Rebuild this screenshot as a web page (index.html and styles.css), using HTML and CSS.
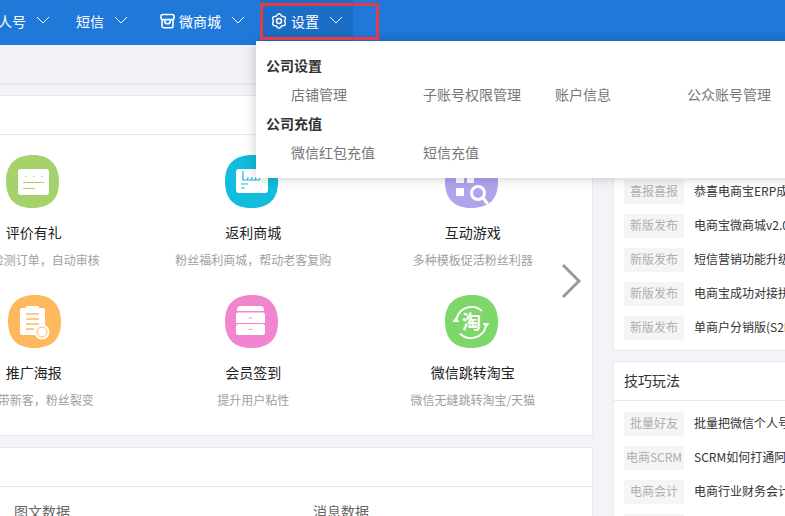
FILE: index.html
```html
<!DOCTYPE html>
<html lang="zh-CN">
<head>
<meta charset="utf-8">
<title>电商宝</title>
<link rel="stylesheet" href="styles.css">
</head>
<body>
<div class="page">
  <header class="topbar">
    <nav class="nav">
      <a class="nav-item"><span>个人号</span><svg class="chev" viewBox="0 0 14 8"><path d="M1 1l6 6 6-6"/></svg></a>
      <a class="nav-item"><span>短信</span><svg class="chev" viewBox="0 0 14 8"><path d="M1 1l6 6 6-6"/></svg></a>
      <a class="nav-item"><svg class="nav-icon store" viewBox="0 0 16 16"><rect x="1" y="1" width="14" height="5.500" rx="2"/><path d="M2.200 6.500v6.700a2 2 0 0 0 2 2h7.600a2 2 0 0 0 2-2V6.500M5 6.500v1.500a3 3 0 0 0 6 0V6.500"/></svg><span>微商城</span><svg class="chev" viewBox="0 0 14 8"><path d="M1 1l6 6 6-6"/></svg></a>
      <a class="nav-item active"><svg class="nav-icon gear" viewBox="0 0 16 16"><path d="M5.200 3.150Q8 -1.500 10.800 3.150Q16.200 3.250 13.600 8Q16.200 12.750 10.800 12.850Q8 17.500 5.200 12.850Q-.2 12.750 2.400 8Q-.2 3.250 5.200 3.150Z"/><circle cx="8" cy="8" r="2.500"/></svg><span>设置</span><svg class="chev" viewBox="0 0 14 8"><path d="M1 1l6 6 6-6"/></svg></a>
    </nav>
  </header>
  <div class="subbar"></div>
  <main class="content">
    <section class="left">
      <div class="card">
        <div class="card-head"></div>
        <div class="apps">
          <div class="app">
            <svg class="app-icon" viewBox="0 0 56 53"><path class="blob-green" d="M27 0C44 0 53 10 53 27 53 44 44 53 26 53 9 53 0 44 0 26 0 9 10 0 27 0Z"/><rect class="w" x="12" y="14" width="31" height="26" rx="3"/><path class="ln-green" d="M19 21.500h1.500M27 21.500h1.500M35 21.500h1.500M17 27.500h21M17 33.500h12"/></svg>
            <div class="app-title">评价有礼</div>
            <div class="app-sub">自动检测订单，自动审核</div>
          </div>
          <div class="app">
            <svg class="app-icon" viewBox="0 0 56 53"><path class="blob-teal" d="M27 0C44 0 53 10 53 27 53 44 44 53 26 53 9 53 0 44 0 26 0 9 10 0 27 0Z"/><rect class="w" x="11" y="14" width="32" height="24" rx="3"/><path class="ln-teal" d="M18 16v9h16c1-.5 1-2 1-3M22 25c1-.5 1-2 1-3M26 25c1-.5 1-2 1-3M30 25c1-.5 1-2 1-3M16 29h7M16 33h4"/></svg>
            <div class="app-title">返利商城</div>
            <div class="app-sub">粉丝福利商城，帮动老客复购</div>
          </div>
          <div class="app">
            <svg class="app-icon" viewBox="0 0 56 53"><path class="blob-purple" d="M27 0C44 0 53 10 53 27 53 44 44 53 26 53 9 53 0 44 0 26 0 9 10 0 27 0Z"/><path class="w" d="M11 11h8v17h-8zM22 11h7v17h-7zM11 33h8v8h-8z"/><circle class="glass" cx="33" cy="38" r="6.500"/><path class="handle" d="M38 43l4 5"/></svg>
            <div class="app-title">互动游戏</div>
            <div class="app-sub">多种模板促活粉丝利器</div>
          </div>
          <div class="app">
            <svg class="app-icon" viewBox="0 0 56 53"><path class="blob-orange" d="M29 0C46 0 55 10 55 27 55 44 46 53 28 53 11 53 2 44 2 26 2 9 12 0 29 0Z"/><rect class="w" x="14" y="13" width="25" height="27" rx="2"/><rect class="w" x="20" y="11" width="13" height="4" rx="1"/><path class="ln-orange" d="M20 19h13M20 24h13M20 29h13M20 34h8"/><circle class="w" cx="36" cy="37" r="7.500"/><circle class="ring-orange" cx="36" cy="37" r="5"/></svg>
            <div class="app-title">推广海报</div>
            <div class="app-sub">老客带新客，粉丝裂变</div>
          </div>
          <div class="app">
            <svg class="app-icon" viewBox="0 0 56 53"><path class="blob-pink" d="M27 0C44 0 53 10 53 27 53 44 44 53 26 53 9 53 0 44 0 26 0 9 10 0 27 0Z"/><path class="w" d="M16 11h19a4 4 0 0 1 4 4v1H12v-1a4 4 0 0 1 4-4z"/><path class="w" d="M13 17.500h25a2 2 0 0 1 2 2V28H11v-8.500a2 2 0 0 1 2-2z"/><rect class="w" x="11" y="29" width="29" height="11" rx="2.500"/><path class="ln-pink" d="M24 23h3M24 34.500h3"/></svg>
            <div class="app-title">会员签到</div>
            <div class="app-sub">提升用户粘性</div>
          </div>
          <div class="app">
            <svg class="app-icon" viewBox="0 0 56 53"><path class="blob-lime" d="M27 0C44 0 53 10 53 27 53 44 44 53 26 53 9 53 0 44 0 26 0 9 10 0 27 0Z"/><path class="arc" d="M11.500 24A15.500 15.500 0 0 1 37 16M41 31A15.500 15.500 0 0 1 15 38.500"/><path class="w" d="M7.500 27h7L11 22zM37.500 28h7L41 33z"/><text class="tao" x="26.500" y="34">淘</text></svg>
            <div class="app-title">微信跳转淘宝</div>
            <div class="app-sub">微信无缝跳转淘宝/天猫</div>
          </div>
        </div>
        <svg class="next" viewBox="0 0 20 36"><path d="M2 2l16 16L2 34"/></svg>
      </div>
      <div class="card card-gap">
        <div class="card-head"></div>
        <div class="stats">
          <div class="stat">图文数据</div>
          <div class="stat">消息数据</div>
        </div>
      </div>
    </section>
    <aside class="right">
      <div class="card">
        <div class="card-head"></div>
        <ul class="news">
          <li class="news-row"><span class="tag">喜报喜报</span><span class="news-text">恭喜电商宝荣获年度服务商</span></li>
          <li class="news-row"><span class="tag">喜报喜报</span><span class="news-text">恭喜电商宝ERP成功上线新版本</span></li>
          <li class="news-row"><span class="tag">新版发布</span><span class="news-text">电商宝微商城v2.0版本发布</span></li>
          <li class="news-row"><span class="tag">新版发布</span><span class="news-text">短信营销功能升级上线公告</span></li>
          <li class="news-row"><span class="tag">新版发布</span><span class="news-text">电商宝成功对接拼多多平台</span></li>
          <li class="news-row"><span class="tag">新版发布</span><span class="news-text">单商户分销版(S2B2C)发布</span></li>
        </ul>
      </div>
      <div class="card card-gap">
        <div class="card-head card-title">技巧玩法</div>
        <ul class="news">
          <li class="news-row"><span class="tag">批量好友</span><span class="news-text">批量把微信个人号好友导入</span></li>
          <li class="news-row"><span class="tag">电商SCRM</span><span class="news-text">SCRM如何打通阿里生态数据</span></li>
          <li class="news-row"><span class="tag">电商会计</span><span class="news-text">电商行业财务会计入门指南</span></li>
          <li class="news-row"><span class="tag">电商会计</span><span class="news-text">电商行业税务处理入门指南</span></li>
        </ul>
      </div>
    </aside>
  </main>
  <div class="dropdown">
    <div class="dd-head">公司设置</div>
    <div class="dd-row"><a>店铺管理</a><a>子账号权限管理</a><a>账户信息</a><a>公众账号管理</a></div>
    <div class="dd-head">公司充值</div>
    <div class="dd-row"><a>微信红包充值</a><a>短信充值</a></div>
  </div>
  <div class="marker"></div>
</div>
</body>
</html>
```
FILE: styles.css
```css
* { box-sizing: border-box; }
html, body { margin: 0; height: 100%; overflow: hidden; }
body {
  background: #f3f4f8;
  font-family: "Noto Sans CJK SC", "Liberation Sans", sans-serif;
  font-size: 14px;
}
ul { margin: 0; padding: 0; list-style: none; }

.page { position: relative; width: 1100px; margin-left: -80px; }

.topbar { height: 45px; background: #2079d9; }
.nav { display: flex; gap: 7px; padding-left: 53px; height: 41px; }
.nav-item {
  display: flex; align-items: center;
  height: 41px; padding: 0 8px 0 11px;
  color: #fff; line-height: 20px; white-space: nowrap;
}
.nav-item.active { background: #1c6dc6; padding-right: 10px; }
.nav-icon {
  width: 16px; height: 16px; margin-right: 4px;
  fill: none; stroke: #fff; stroke-width: 1.500;
}
.nav-icon.gear { stroke-width: 1.500; stroke-linejoin: round; overflow: visible; }
.nav-icon.store { margin-left: 6px; width: 15px; stroke-width: 1.700; }
.chev {
  width: 14px; height: 8px; margin: 0 0 2px 10px;
  fill: none; stroke: #fff; stroke-width: 1;
}

.subbar { height: 40px; background: #f1f2f6; border-bottom: 2px solid #e8e9ed; }

.content { display: flex; gap: 20px; padding-top: 10px; }
.left { flex: none; width: 673px; }
.right { flex: none; width: 300px; }

.card { position: relative; background: #fff; border: 1px solid #e8e9ee; }
.card-gap { margin-top: 10px; }
.card-head { height: 39px; border-bottom: 1px solid #e8e9ee; }
.left .card-gap { margin-top: 11px; }
.card-title { padding-left: 10px; line-height: 36px; color: #333; }

.apps {
  display: grid;
  grid-template-columns: repeat(3, 219.5px);
  grid-auto-rows: 140px;
  height: 300px;
  padding: 20px 0 0 3px;
}
.app { display: flex; flex-direction: column; align-items: center; white-space: nowrap; }
.app-icon { display: block; width: 56px; height: 53px; flex: none; }
.app-title { margin-top: 14px; line-height: 20px; color: #222; }
.app-sub { margin-top: 8px; line-height: 20px; font-size: 12px; color: #a0a0a0; }

.blob-green { fill: #a5d26a; }
.blob-teal { fill: #12bcdc; }
.blob-purple { fill: #b1a3ee; }
.blob-orange { fill: #feb95f; }
.blob-pink { fill: #f285cf; }
.blob-lime { fill: #7dd76b; }
.w { fill: #fff; }
.ln-green, .ln-teal, .ln-orange, .ln-pink { fill: none; stroke-width: 1.200; }
.ln-green { stroke: #a5d26a; }
.ln-teal { stroke: #12bcdc; }
.ln-orange { stroke: #feb95f; stroke-width: 1.600; }
.ln-pink { stroke: #f285cf; }
.ring-orange { fill: none; stroke: #feb95f; stroke-width: 1; }
.glass { fill: #b1a3ee; stroke: #fff; stroke-width: 3; }
.handle { fill: none; stroke: #fff; stroke-width: 3; stroke-linecap: round; }
.arc { fill: none; stroke: #fff; stroke-width: 1.800; }
.tao { fill: #fff; font-size: 19px; font-weight: 700; text-anchor: middle; }

.next {
  position: absolute; left: 640px; top: 167px;
  width: 20px; height: 36px;
  fill: none; stroke: #999; stroke-width: 3;
}

.stats { display: flex; padding: 14px 0 0 93px; }
.stat { flex: none; width: 299px; line-height: 20px; color: #666; }

.news { display: flex; flex-direction: column; gap: 10px; padding: 11px 0 10px 10px; }
.news-row { display: flex; gap: 10px; height: 24px; white-space: nowrap; }
.tag {
  flex: none; width: 60px; line-height: 22px; height: 24px; text-align: center;
  font-size: 12px; color: #aeaeae; background: #f4f5f7;
}
.news-text { font-size: 12px; line-height: 22px; color: #333; }

.dropdown {
  position: absolute; left: 336px; top: 41px; width: 620px;
  padding: 10px 0 11px 10px;
  background: #fff;
  box-shadow: 0 0 12px rgba(0, 0, 0, .22);
}
.dd-head { line-height: 29px; font-weight: 700; color: #333; }
.dd-row {
  display: grid; grid-template-columns: repeat(4, 132px);
  padding-left: 25px; line-height: 29px; color: #777;
}

.marker {
  position: absolute; left: 340px; top: 3px; width: 119px; height: 37px;
  border: 3px solid #e23c4b;
}
```
